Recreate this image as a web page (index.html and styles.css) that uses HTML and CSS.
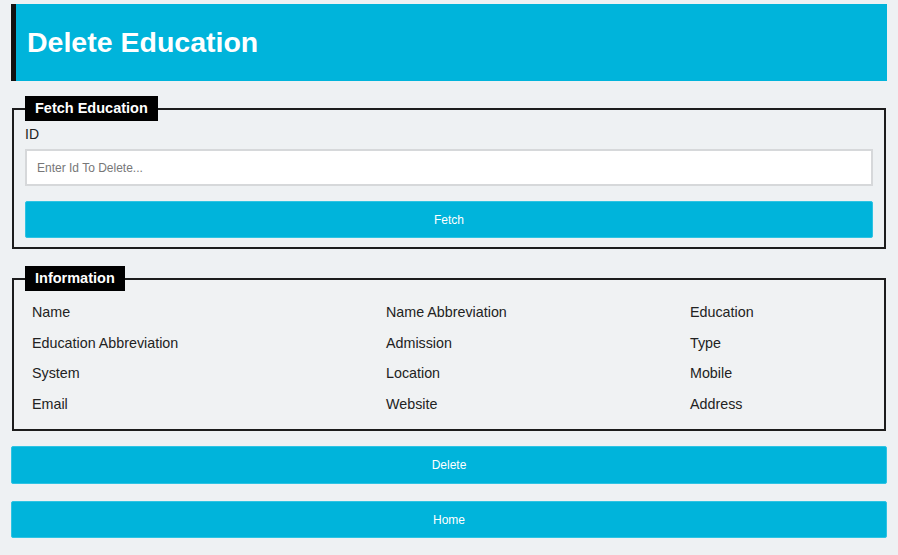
FILE: index.html
```html
<!DOCTYPE html>
<html>
<head>
<meta charset="utf-8">
<link rel="stylesheet" href="styles.css">
</head>
<body>
<div class="page">
  <header class="banner"><h1>Delete Education</h1></header>
  <fieldset class="box fetch">
    <legend>Fetch Education</legend>
    <label class="lbl" for="id">ID</label>
    <input id="id" class="field" type="text" placeholder="Enter Id To Delete...">
    <button class="btn fetch-btn">Fetch</button>
  </fieldset>
  <fieldset class="box info">
    <legend>Information</legend>
    <div class="grid">
      <span>Name</span><span>Name Abbreviation</span><span>Education</span>
      <span>Education Abbreviation</span><span>Admission</span><span>Type</span>
      <span>System</span><span>Location</span><span>Mobile</span>
      <span>Email</span><span>Website</span><span>Address</span>
    </div>
  </fieldset>
  <button class="btn wide delete">Delete</button>
  <button class="btn wide home">Home</button>
</div>
</body>
</html>
```
FILE: styles.css
```css
html, body {
  margin: 0;
  padding: 0;
  background: #eef1f3;
  font-family: "Liberation Sans", Arial, sans-serif;
  color: #222;
}
.page {
  padding: 4px 11px 0 11px;
  display: flex;
  flex-direction: column;
}
.banner {
  background: #00b4db;
  border-left: 5px solid #111;
  height: 77px;
  display: flex;
  align-items: center;
  padding-left: 11px;
  box-sizing: border-box;
}
.banner h1 {
  margin: 0;
  color: #fff;
  font-size: 28.5px;
  font-weight: bold;
}
.box {
  margin: 15px 1px 0 1px;
  border: 2px solid #1c1c1c;
  padding: 0 11px 9px 11px;
  min-width: 0;
}
.box legend {
  background: #000;
  color: #fff;
  font-weight: bold;
  font-size: 14.5px;
  line-height: 25px;
  padding: 0 10px;
}
.lbl {
  display: block;
  margin-top: 4px;
  font-size: 14px;
  line-height: 18px;
  color: #222;
}
.field {
  display: block;
  box-sizing: border-box;
  width: 100%;
  height: 37px;
  margin-top: 6px;
  border: 2px solid #d6d8da;
  background: #fff;
  padding: 0 10px;
  font-family: inherit;
  font-size: 12px;
  color: #333;
  outline: none;
}
.field::placeholder {
  color: #777;
}
.btn {
  display: block;
  box-sizing: border-box;
  width: 100%;
  background: #00b4db;
  border: 1px solid #2ec3e3;
  border-radius: 2px;
  color: #fff;
  font-family: inherit;
  font-size: 12px;
  cursor: pointer;
}
.fetch-btn {
  height: 37px;
  margin-top: 15px;
}
.info {
  margin-top: 17px;
  padding-bottom: 10px;
  background: #f0f2f3;
}
.info legend {
  background: #000;
}
.grid {
  display: grid;
  grid-template-columns: 354px 304px 1fr;
  grid-auto-rows: 30.5px;
  padding: 6px 0 0 7px;
  font-size: 14.3px;
  color: #222;
  align-items: center;
}
.wide {
  height: 38px;
}
.delete {
  margin-top: 15px;
}
.home {
  margin-top: 17px;
  height: 37px;
}
```
